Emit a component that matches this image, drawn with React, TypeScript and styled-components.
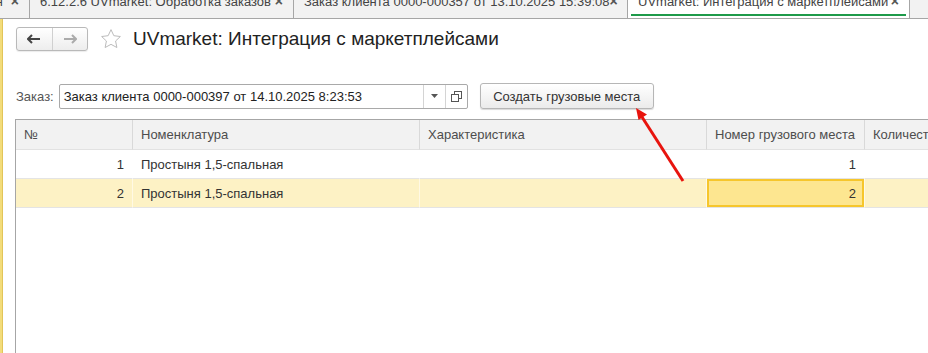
import React from 'react';
import styled, { createGlobalStyle } from 'styled-components';

const GlobalStyle = createGlobalStyle`
  html, body {
    margin: 0;
    padding: 0;
    background: #ffffff;
    overflow: hidden;
  }
  body {
    font-family: "Liberation Sans", Arial, sans-serif;
    font-size: 13px;
    color: #333;
  }
`;

const Page = styled.div`
  position: relative;
  width: 928px;
  height: 353px;
  display: flex;
  flex-direction: column;
  overflow: hidden;
`;

const TabBar = styled.div`
  height: 18px;
  flex: none;
  display: flex;
  background: #f2f2f2;
  border-bottom: 1px solid #a6a6a6;
  overflow: hidden;
`;

const Tab = styled.div<{ $width: number; $active?: boolean }>`
  position: relative;
  flex: none;
  width: ${({ $width }) => $width}px;
  box-sizing: border-box;
  display: flex;
  align-items: flex-start;
  justify-content: space-between;
  padding: 0 10px 0 ${({ $active }) => ($active ? 10 : 10)}px;
  border-right: 1px solid #a6a6a6;
  background: ${({ $active }) => ($active ? '#ffffff' : '#f2f2f2')};
  color: #444;
  font-size: 13px;
  white-space: nowrap;
  overflow: hidden;

  ${({ $active }) =>
    $active &&
    `
    &::after {
      content: '';
      position: absolute;
      left: 3px;
      right: 3px;
      top: 14px;
      height: 2px;
      background: #1e9a4a;
    }
  `}
`;

const TabLabel = styled.span`
  margin-top: -6px;
  line-height: 15px;
`;

const TabClose = styled.span`
  margin-top: -6px;
  line-height: 15px;
  font-weight: bold;
  color: #555;
  font-size: 14px;
`;

const Body = styled.div`
  flex: 1;
  display: flex;
  min-height: 0;
`;

const Stripe = styled.div`
  width: 3px;
  flex: none;
  background: #f3dc7a;
  border-right: 1px solid #e2c559;
  box-sizing: border-box;
`;

const Main = styled.div`
  flex: 1;
  display: flex;
  flex-direction: column;
  padding-left: 13px;
  min-width: 0;
`;

const HeaderRow = styled.div`
  margin-top: 8px;
  height: 24px;
  display: flex;
  align-items: center;
`;

const NavGroup = styled.div`
  display: flex;
  width: 72px;
  height: 24px;
  box-sizing: border-box;
  border: 1px solid #b9b9b9;
  border-radius: 3px;
  background: linear-gradient(#ffffff, #ededed);
  box-shadow: 0 1px 1px rgba(0, 0, 0, 0.08);
`;

const NavButton = styled.div<{ $divider?: boolean }>`
  flex: 1;
  display: flex;
  align-items: center;
  justify-content: center;
  border-left: ${({ $divider }) => ($divider ? '1px solid #d0d0d0' : 'none')};
`;

const StarWrap = styled.div`
  margin-left: 12px;
  width: 22px;
  height: 22px;
  display: flex;
`;

const Title = styled.h1`
  margin: 0 0 0 11px;
  font-size: 19px;
  font-weight: normal;
  color: #222;
  white-space: nowrap;
`;

const FormRow = styled.div`
  margin-top: 32px;
  height: 26px;
  display: flex;
  align-items: center;
`;

const Label = styled.span`
  color: #555;
  margin-right: 5px;
`;

const Field = styled.div`
  width: 409px;
  height: 25px;
  box-sizing: border-box;
  display: flex;
  border: 1px solid #a9a9a9;
  border-radius: 2px;
  background: #fff;
`;

const FieldText = styled.div`
  flex: 1;
  padding-left: 4px;
  display: flex;
  align-items: center;
  color: #222;
  white-space: nowrap;
  overflow: hidden;
`;

const FieldButton = styled.div`
  width: 21px;
  flex: none;
  display: flex;
  align-items: center;
  justify-content: center;
  border-left: 1px solid #d4d4d4;
`;

const Button = styled.div`
  margin-left: 12px;
  width: 174px;
  height: 26px;
  box-sizing: border-box;
  display: flex;
  align-items: center;
  justify-content: center;
  border: 1px solid #b6b6b6;
  border-radius: 3px;
  background: linear-gradient(#ffffff, #ebebeb);
  box-shadow: 0 1px 1px rgba(0, 0, 0, 0.15);
  color: #333;
  white-space: nowrap;
`;

const Table = styled.div`
  margin: 10px 0 0 -1px;
  flex: 1;
  border-top: 1px solid #a6a6a6;
  border-left: 1px solid #a6a6a6;
  display: flex;
  flex-direction: column;
  overflow: hidden;
`;

const Grid = styled.div`
  display: grid;
  grid-template-columns: 117px 287px 287px 158px 120px;
`;

const HeadCell = styled.div`
  height: 30px;
  box-sizing: border-box;
  display: flex;
  align-items: center;
  padding-left: 8px;
  background: #f2f2f2;
  border-right: 1px solid #d9d9d9;
  border-bottom: 1px solid #e2e2e2;
  color: #4d4d4d;
  white-space: nowrap;
  overflow: hidden;
`;

const Cell = styled.div<{ $alt?: boolean; $right?: boolean; $selected?: boolean }>`
  height: 29px;
  box-sizing: border-box;
  display: flex;
  align-items: center;
  justify-content: ${({ $right }) => ($right ? 'flex-end' : 'flex-start')};
  padding: 0 8px;
  background: ${({ $alt, $selected }) => ($selected ? '#fde690' : $alt ? '#fdf2c5' : '#ffffff')};
  border-right: 1px solid ${({ $alt }) => ($alt ? '#fff9e4' : '#ffffff')};
  border-bottom: 1px solid #e4e4e4;
  box-shadow: ${({ $selected }) => ($selected ? 'inset 0 0 0 2px #f6c62c' : 'none')};
  color: #333;
  white-space: nowrap;
`;

const ArrowLayer = styled.svg`
  position: absolute;
  left: 0;
  top: 0;
  pointer-events: none;
`;

const columns = ['№', 'Номенклатура', 'Характеристика', 'Номер грузового места', 'Количество'];

const rows = [
  { n: 1, item: 'Простыня 1,5-спальная', place: 1 },
  { n: 2, item: 'Простыня 1,5-спальная', place: 2 },
];

const tabs = [
  { w: 30, label: 'я' },
  { w: 264, label: '6.12.2.6 UVmarket: Обработка заказов' },
  { w: 334, label: 'Заказ клиента 0000-000357 от 13.10.2025 15:39:08' },
  { w: 282, label: 'UVmarket: Интеграция с маркетплейсами', active: true },
];

const App = () => {
  return (
    <Page>
      <GlobalStyle />
      <TabBar>
        {tabs.map((t, i) => (
          <Tab key={i} $width={t.w} $active={t.active} style={i === 0 ? { justifyContent: 'flex-end', paddingLeft: 0 } : undefined}>
            {i === 0 ? (
              <>
                <TabLabel style={{ marginRight: 8 }}>{t.label}</TabLabel>
                <TabClose>×</TabClose>
              </>
            ) : (
              <>
                <TabLabel>{t.label}</TabLabel>
                <TabClose>×</TabClose>
              </>
            )}
          </Tab>
        ))}
      </TabBar>
      <Body>
        <Stripe />
        <Main>
          <HeaderRow>
            <NavGroup>
              <NavButton>
                <svg width="14" height="10" viewBox="0 0 14 10">
                  <path d="M1 5h12M5 1L1 5l4 4" stroke="#444" strokeWidth="2" fill="none" />
                </svg>
              </NavButton>
              <NavButton $divider>
                <svg width="14" height="10" viewBox="0 0 14 10">
                  <path d="M1 5h12M9 1l4 4-4 4" stroke="#ababab" strokeWidth="2" fill="none" />
                </svg>
              </NavButton>
            </NavGroup>
            <StarWrap>
              <svg width="22" height="22" viewBox="0 0 24 24">
                <path
                  d="M12 1.8l3.1 6.6 7.1.9-5.2 4.9 1.4 7.1L12 17.8l-6.4 3.5 1.4-7.1-5.2-4.9 7.1-.9z"
                  stroke="#b5b5b5"
                  strokeWidth="1"
                  fill="none"
                  strokeLinejoin="round"
                />
              </svg>
            </StarWrap>
            <Title>UVmarket: Интеграция с маркетплейсами</Title>
          </HeaderRow>
          <FormRow>
            <Label>Заказ:</Label>
            <Field>
              <FieldText>Заказ клиента 0000-000397 от 14.10.2025 8:23:53</FieldText>
              <FieldButton>
                <svg width="7" height="4" viewBox="0 0 7 4">
                  <path d="M0 0h7L3.5 4z" fill="#555" />
                </svg>
              </FieldButton>
              <FieldButton>
                <svg width="11" height="11" viewBox="0 0 11 11">
                  <rect x="3.5" y="0.5" width="7" height="7" fill="none" stroke="#555" />
                  <rect x="0.5" y="3.5" width="7" height="7" fill="#fff" stroke="#555" />
                </svg>
              </FieldButton>
            </Field>
            <Button>Создать грузовые места</Button>
          </FormRow>
          <Table>
            <Grid>
              {columns.map((c) => (
                <HeadCell key={c}>{c}</HeadCell>
              ))}
              {rows.map((r) => {
                const alt = r.n === 2;
                return (
                  <React.Fragment key={r.n}>
                    <Cell $alt={alt} $right>{r.n}</Cell>
                    <Cell $alt={alt}>{r.item}</Cell>
                    <Cell $alt={alt} />
                    <Cell $alt={alt} $right $selected={alt}>{r.place}</Cell>
                    <Cell $alt={alt} />
                  </React.Fragment>
                );
              })}
            </Grid>
          </Table>
        </Main>
      </Body>
      <ArrowLayer width="928" height="353" viewBox="0 0 928 353">
        <line x1="683" y1="181" x2="642" y2="117" stroke="#e8140e" strokeWidth="3" />
        <path d="M636 108l11 6.5-8.5 5.5z" fill="#e8140e" />
      </ArrowLayer>
    </Page>
  );
};

export default App;
